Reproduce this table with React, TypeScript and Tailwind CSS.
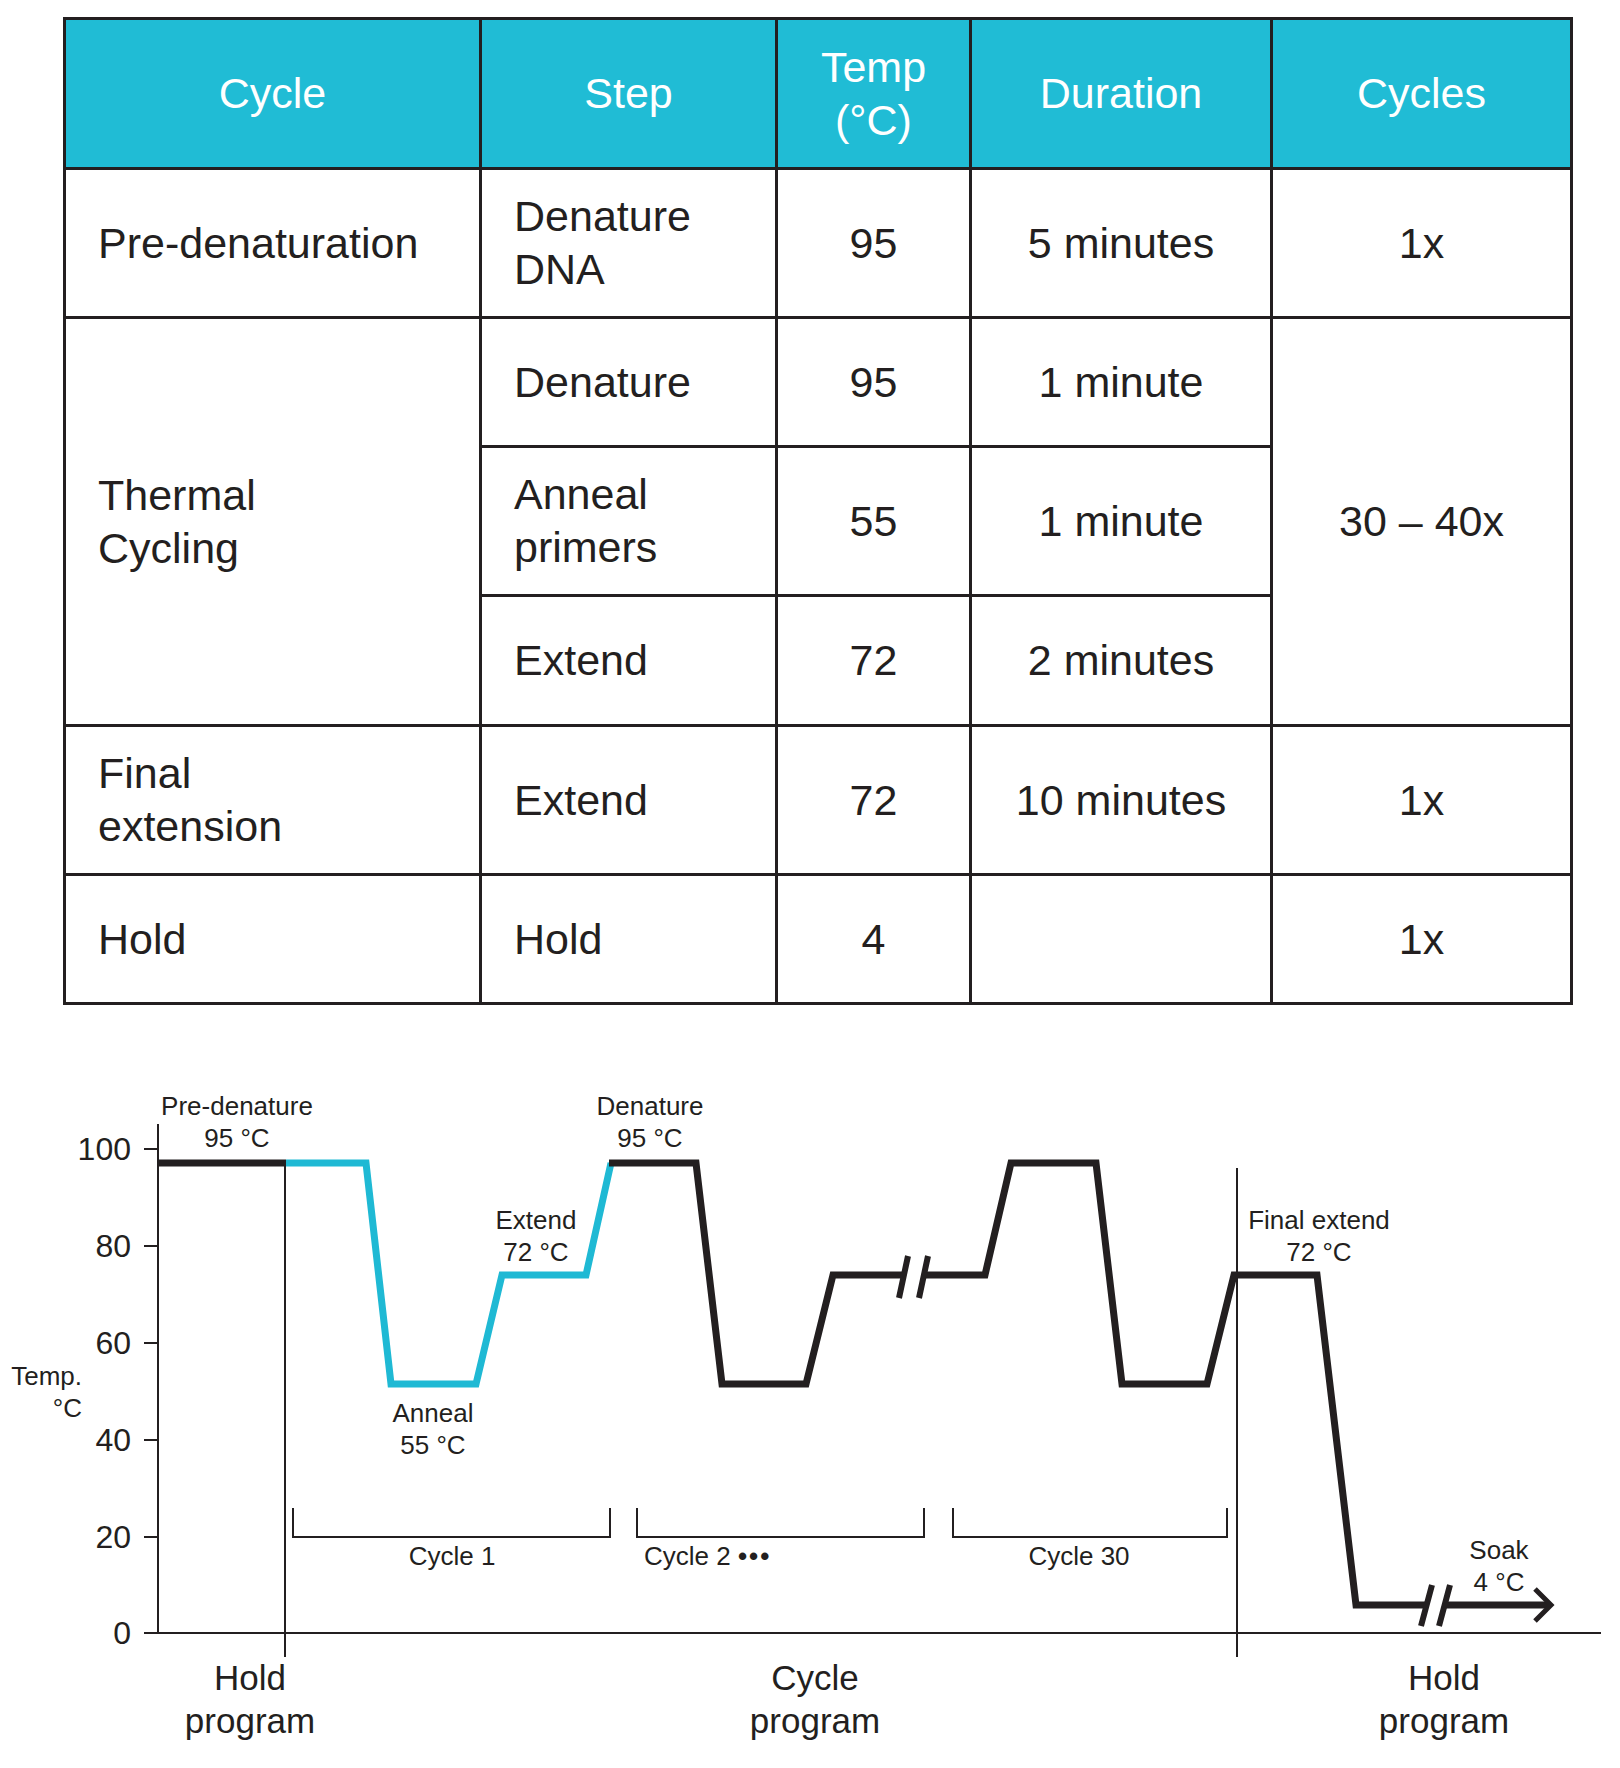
import React from 'react';

const INK = '#231f20';

type Cell = {
  lines: string[];
  align?: 'left' | 'center';
  span?: boolean;
  head?: boolean;
};

const CELLS: Cell[] = [
  { lines: ['Cycle'], head: true },
  { lines: ['Step'], head: true },
  { lines: ['Temp', '(°C)'], head: true },
  { lines: ['Duration'], head: true },
  { lines: ['Cycles'], head: true },

  { lines: ['Pre-denaturation'], align: 'left' },
  { lines: ['Denature', 'DNA'], align: 'left' },
  { lines: ['95'] },
  { lines: ['5 minutes'] },
  { lines: ['1x'] },

  { lines: ['Thermal', 'Cycling'], align: 'left', span: true },
  { lines: ['Denature'], align: 'left' },
  { lines: ['95'] },
  { lines: ['1 minute'] },
  { lines: ['30 – 40x'], span: true },

  { lines: ['Anneal', 'primers'], align: 'left' },
  { lines: ['55'] },
  { lines: ['1 minute'] },

  { lines: ['Extend'], align: 'left' },
  { lines: ['72'] },
  { lines: ['2 minutes'] },

  { lines: ['Final', 'extension'], align: 'left' },
  { lines: ['Extend'], align: 'left' },
  { lines: ['72'] },
  { lines: ['10 minutes'] },
  { lines: ['1x'] },

  { lines: ['Hold'], align: 'left' },
  { lines: ['Hold'], align: 'left' },
  { lines: ['4'] },
  { lines: [] },
  { lines: ['1x'] },
];

const ProtocolTable: React.FC = () => (
  <div className="ml-[63px] pt-[17px]">
    <div className="grid w-[1510px] grid-cols-[413px_293px_191px_298px_297px] grid-rows-[147px_146px_126px_146px_127px_146px_126px] gap-[3px] bg-[#231f20] p-[3px] text-[43px] leading-[53px]">
      {CELLS.map((c, i) => (
        <div
          key={i}
          className={[
            'flex items-center',
            c.head ? 'bg-[#20bcd5] text-white justify-center text-center' : 'bg-white text-[#231f20]',
            !c.head && c.align === 'left' ? 'pl-[32px]' : '',
            !c.head && c.align !== 'left' ? 'justify-center text-center' : '',
            c.span ? 'row-span-3' : '',
          ].join(' ')}
        >
          <div>
            {c.lines.map((l, j) => (
              <div key={j}>{l}</div>
            ))}
          </div>
        </div>
      ))}
    </div>
  </div>
);

// y position of each axis tick, page coordinates
const TICKS: [string, number][] = [
  ['100', 1149],
  ['80', 1246],
  ['60', 1343],
  ['40', 1440],
  ['20', 1537],
  ['0', 1633],
];

const Label: React.FC<{ x: number; y: number; a: string; b: string; anchor?: 'middle' | 'end' }> = ({ x, y, a, b, anchor = 'middle' }) => (
  <text x={x} y={y} textAnchor={anchor} fontSize={26} fill={INK}>
    <tspan x={x}>{a}</tspan>
    <tspan x={x} dy={32}>{b}</tspan>
  </text>
);

const CycleChart: React.FC = () => (
  <svg width={1620} height={763} viewBox="0 1005 1620 763" className="block">
    {/* axes */}
    <g stroke={INK} strokeWidth={2} fill="none">
      <path d="M158 1124 V1633 M144 1633 H1601" />
      {TICKS.map(([, y]) => (
        <path key={y} d={`M144 ${y} H158`} />
      ))}
      <path d="M285 1163 V1657 M1237 1168 V1657" />
      <path d="M293 1508 V1537 H610 V1508" />
      <path d="M637 1508 V1537 H924 V1508" />
      <path d="M953 1508 V1537 H1227 V1508" />
    </g>

    {TICKS.map(([t, y]) => (
      <text key={t} x={131} y={y + 11} textAnchor="end" fontSize={32} fill={INK}>
        {t}
      </text>
    ))}

    {/* temperature profile */}
    <g fill="none" strokeWidth={7} strokeLinejoin="miter">
      <path d="M158 1163 H286" stroke={INK} />
      <path d="M286 1163 H366 L391 1384 H476 L502 1275 H586 L611 1163" stroke="#1fb9d4" />
      <path d="M609 1163 H696 L722 1384 H806 L833 1275 H903" stroke={INK} />
      <path d="M924 1275 H985 L1011 1163 H1096 L1122 1384 H1207 L1234 1275 H1317 L1356 1605 H1426" stroke={INK} />
      <path d="M1444 1605 H1550" stroke={INK} />
      <path d="M1535 1589 L1551 1605 L1535 1621" stroke={INK} strokeWidth={5} />
      <g strokeWidth={6} stroke={INK}>
        <path d="M908 1256 L899 1298 M928 1256 L919 1298" />
        <path d="M1432 1585 L1421 1626 M1450 1585 L1439 1626" />
      </g>
    </g>

    {/* annotations */}
    <Label x={237} y={1115} a="Pre-denature" b="95 °C" />
    <Label x={650} y={1115} a="Denature" b="95 °C" />
    <Label x={536} y={1229} a="Extend" b="72 °C" />
    <Label x={433} y={1422} a="Anneal" b="55 °C" />
    <Label x={1319} y={1229} a="Final extend" b="72 °C" />
    <Label x={1499} y={1559} a="Soak" b="4 °C" />
    <Label x={82} y={1385} a="Temp." b="°C" anchor="end" />

    <text x={452} y={1565} textAnchor="middle" fontSize={26} fill={INK}>
      Cycle 1
    </text>
    <text x={644} y={1565} fontSize={26} fill={INK}>
      Cycle 2{' '}
      <tspan fontWeight={700} letterSpacing={2}>
        •••
      </tspan>
    </text>
    <text x={1079} y={1565} textAnchor="middle" fontSize={26} fill={INK}>
      Cycle 30
    </text>

    {[
      [250, 'Hold'],
      [815, 'Cycle'],
      [1444, 'Hold'],
    ].map(([x, t]) => (
      <text key={x} x={x} y={1690} textAnchor="middle" fontSize={35} fill={INK}>
        <tspan x={x}>{t}</tspan>
        <tspan x={x} dy={43}>
          program
        </tspan>
      </text>
    ))}
  </svg>
);

export default function App() {
  return (
    <div className="h-[1768px] w-[1620px] bg-white font-['Liberation_Sans',Arial,sans-serif]">
      <ProtocolTable />
      <CycleChart />
    </div>
  );
}
